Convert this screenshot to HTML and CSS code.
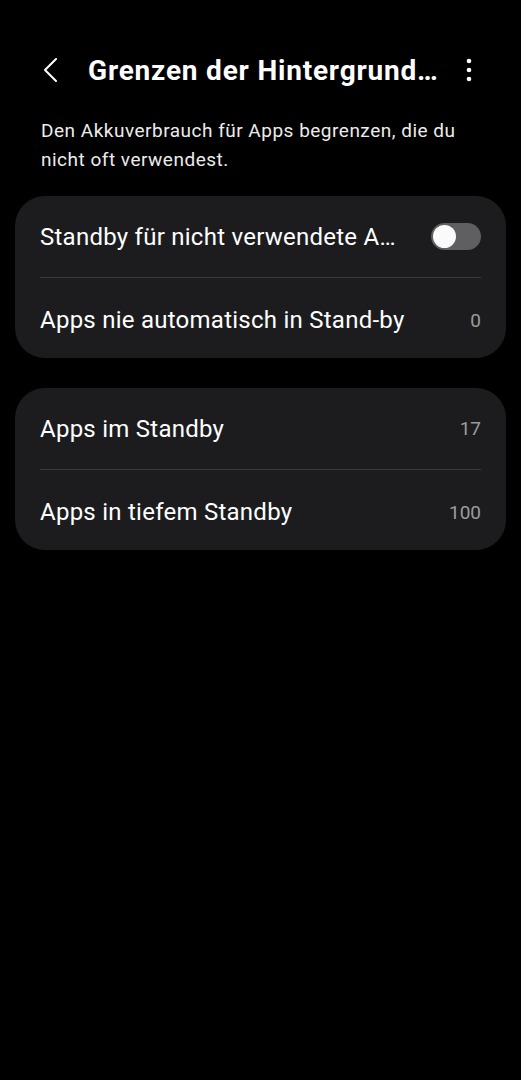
FILE: index.html
```html
<!DOCTYPE html>
<html lang="de">
<head>
  <meta charset="UTF-8" />
  <meta name="viewport" content="width=device-width, initial-scale=1.0"/>
  <title>Grenzen der Hintergrundnutzung</title>
  <link rel="stylesheet" href="styles.css">
</head>
<body>
  <div class="appbar">
    <button class="back" aria-label="Zurück">
      <svg width="16" height="24" viewBox="0 0 16 24"><path d="M14 1 L3 12 L14 23" fill="none" stroke="#fff" stroke-width="2" stroke-linecap="round" stroke-linejoin="round"/></svg>
    </button>
    <h1 class="title">Grenzen der Hintergrund…</h1>
    <button class="more" aria-label="Weitere Optionen">
      <svg width="6" height="24" viewBox="0 0 6 24"><circle cx="3" cy="3" r="2.3" fill="#fff"/><circle cx="3" cy="12" r="2.3" fill="#fff"/><circle cx="3" cy="21" r="2.3" fill="#fff"/></svg>
    </button>
  </div>

  <p class="intro">Den Akkuverbrauch für Apps begrenzen, die du nicht oft verwendest.</p>

  <div class="card">
    <div class="row">
      <span class="label">Standby für nicht verwendete A…</span>
      <span class="switch"><span class="knob"></span></span>
    </div>
    <div class="row">
      <span class="label">Apps nie automatisch in Stand-by</span>
      <span class="count">0</span>
    </div>
  </div>

  <div class="card">
    <div class="row">
      <span class="label">Apps im Standby</span>
      <span class="count">17</span>
    </div>
    <div class="row">
      <span class="label">Apps in tiefem Standby</span>
      <span class="count">100</span>
    </div>
  </div>
</body>
</html>
```

FILE: styles.css
```css
html, body {
  margin: 0;
  height: 100%;
  background-color: #000;
  color: #fff;
  font-family: Roboto, "Noto Sans", sans-serif;
}

body {
  padding: 0 15px;
  box-sizing: border-box;
}

.appbar {
  display: flex;
  align-items: center;
  height: 60px;
  margin-top: 40px;
  padding: 0 34px 0 27px;
}

button {
  background: transparent;
  border: none;
  padding: 0;
  cursor: pointer;
  display: flex;
}

.title {
  flex: 1;
  margin: 0 0 0 30px;
  font-size: 28px;
  font-weight: 700;
  letter-spacing: 0.8px;
  white-space: nowrap;
  overflow: hidden;
  text-overflow: ellipsis;
}

.more {
  margin-left: 12px;
}

.intro {
  margin: 16px 26px 22px;
  font-size: 19px;
  line-height: 29px;
  letter-spacing: 0.5px;
  color: #ececec;
}

.card {
  background-color: #1c1c1e;
  border-radius: 30px;
  padding: 0 25px;
  margin-bottom: 30px;
}

.row {
  display: flex;
  align-items: center;
  justify-content: space-between;
  height: 81px;
  box-sizing: border-box;
}

.row + .row {
  border-top: 1px solid #3a3a3c;
  padding-top: 4px;
}

.label {
  font-size: 24px;
  letter-spacing: 0.25px;
  white-space: nowrap;
  overflow: hidden;
  text-overflow: ellipsis;
}

.count {
  font-size: 19px;
  color: #9c9c9c;
}

.switch {
  width: 50px;
  height: 27px;
  border-radius: 14px;
  background-color: #5f5f61;
  display: flex;
  align-items: center;
  padding: 0 2px;
  box-sizing: border-box;
}

.knob {
  width: 23px;
  height: 23px;
  border-radius: 50%;
  background-color: #fafafa;
}
```
